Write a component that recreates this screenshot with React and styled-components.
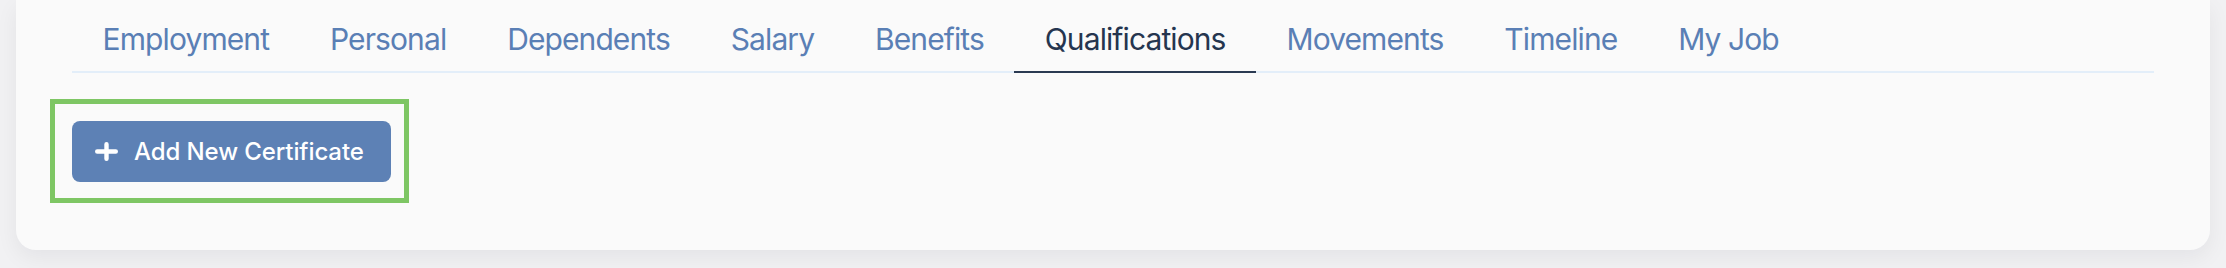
import React from "react";
import styled, { createGlobalStyle } from "styled-components";

const Global = createGlobalStyle`
  html, body { margin: 0; padding: 0; }
  body {
    background: #f1f1f3;
    font-family: Inter, "Noto Sans", sans-serif;
    -webkit-font-smoothing: antialiased;
  }
`;

const Page = styled.div`
  width: 2226px;
  height: 268px;
  padding: 0 16px;
  box-sizing: border-box;
`;

const Card = styled.div`
  height: 250px;
  background: #fafafa;
  border-radius: 0 0 20px 20px;
  box-shadow: 0 8px 22px rgba(20, 20, 40, 0.06);
  padding: 0 56px;
  box-sizing: border-box;
  display: flex;
  flex-direction: column;
`;

const TabList = styled.nav`
  display: flex;
  padding-top: 21px;
  border-bottom: 2px solid #e3eef9;
`;

const Tab = styled.div`
  padding: 0 30.3px 14px 30.6px;
  font-size: 30px;
  line-height: 36px;
  font-weight: 400;
  letter-spacing: -0.9px;
  color: ${(p) => (p.$active ? "#25354f" : "#5a7fb5")};
  border-bottom: 2px solid ${(p) => (p.$active ? "#2a3a52" : "transparent")};
  margin-bottom: -2px;
  white-space: nowrap;
`;

const Highlight = styled.div`
  align-self: flex-start;
  margin: 26px 0 0 -22px;
  border: 5px solid #7ec664;
  padding: 17px 13px 16px 17px;
`;

const Button = styled.button`
  display: flex;
  align-items: center;
  height: 61px;
  width: 319px;
  padding: 0 23px;
  box-sizing: border-box;
  background: #5d81b5;
  border: none;
  border-radius: 8px;
  color: #ffffff;
  font-family: Inter, "Noto Sans", sans-serif;
  font-size: 24px;
  font-weight: 500;
  letter-spacing: -0.1px;
  gap: 16px;
  cursor: pointer;
  white-space: nowrap;
`;

const PlusIcon = () => (
  <svg width="23" height="19" viewBox="0 0 23 19" aria-hidden="true">
    <path d="M11.5 2.2 V16.8 M2.2 9.5 H20.8" stroke="#fff" strokeWidth="4.4" strokeLinecap="round" fill="none" />
  </svg>
);

const tabs = [
  "Employment",
  "Personal",
  "Dependents",
  "Salary",
  "Benefits",
  "Qualifications",
  "Movements",
  "Timeline",
  "My Job",
];

export default function App() {
  return (
    <>
      <Global />
      <Page>
        <Card>
          <TabList>
            {tabs.map((t) => (
              <Tab key={t} $active={t === "Qualifications"}>
                {t}
              </Tab>
            ))}
          </TabList>
          <Highlight>
            <Button>
              <PlusIcon />
              Add New Certificate
            </Button>
          </Highlight>
        </Card>
      </Page>
    </>
  );
}
